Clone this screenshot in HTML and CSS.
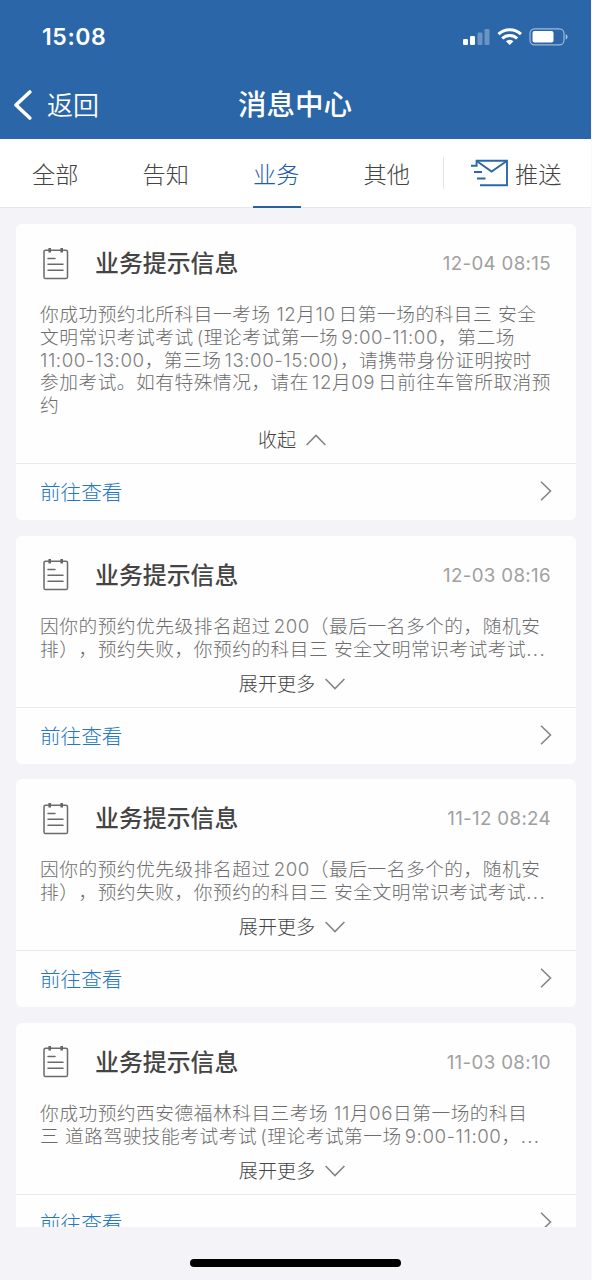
FILE: index.html
```html
<!DOCTYPE html>
<html lang="zh-CN">
<head>
<meta charset="utf-8">
<title>消息中心</title>
<link rel="stylesheet" href="styles.css">
</head>
<body>
<svg class="defs" width="0" height="0" aria-hidden="true">
  <symbol id="note" viewBox="0 0 26 32"><g fill="none" stroke="#6a6a6a" stroke-width="1.5"><rect x="1" y="2.2" width="23.5" height="28.3" rx="1.6"/><path d="M5 10.5h7M5 16.3h15M5 22.3h15" stroke-linecap="round"/></g><path d="M6.7 0v4.4M18.7 0v4.4" stroke="#666" stroke-width="2.6"/></symbol>
  <symbol id="right" viewBox="0 0 12 20"><path d="M1 .8 10.5 10 1 19.2" fill="none" stroke="#858585" stroke-width="1.6"/></symbol>
  <symbol id="up" viewBox="0 0 20 12"><path d="M.6 11 10 1.5 19.4 11" fill="none" stroke="#858585" stroke-width="1.6"/></symbol>
  <symbol id="down" viewBox="0 0 20 12"><path d="M.6 1 10 10.5 19.4 1" fill="none" stroke="#858585" stroke-width="1.6"/></symbol>
</svg>
<div class="app">
  <header class="top">
    <div class="status">
      <span class="clock">15:08</span>
      <svg class="status-icons" width="106" height="20" viewBox="0 0 106 20">
        <g fill="#fff"><rect x="1" y="11" width="5" height="6" rx="1.2"/><rect x="8" y="8" width="5" height="9" rx="1.2"/><g opacity=".3"><rect x="15.5" y="4.5" width="5" height="12.5" rx="1.2"/><rect x="22.5" y="1" width="5" height="16" rx="1.2"/></g>
        <path d="M47.7 17 43.9 13.2a5.5 5.5 0 0 1 7.6 0z"/><rect x="70.5" y="3" width="21" height="11.5" rx="2"/></g>
        <g fill="none" stroke="#fff"><path d="M36.5 6.2a16.2 16.2 0 0 1 22.5 0M40.2 10.5a11 11 0 0 1 15 0" stroke-width="3"/><rect x="68" y=".8" width="34" height="16" rx="4.6" stroke-width="1.2" opacity=".55"/></g><path d="M103.7 6v5.6q1.9-.9 1.9-2.8t-1.9-2.8z" fill="#fff" opacity=".6"/>
      </svg>
    </div>
    <nav class="nav">
      <a class="back"><svg width="19" height="30" viewBox="0 0 19 30"><path d="M16.8 2 3 15l13.8 13" fill="none" stroke="#fff" stroke-width="3.6" stroke-linecap="round" stroke-linejoin="round"/></svg><span>返回</span></a>
      <h1>消息中心</h1>
    </nav>
  </header>
  <div class="tabs">
    <a class="tab">全部</a><a class="tab">告知</a><a class="tab active">业务</a><a class="tab">其他</a>
    <a class="push"><svg width="38" height="28" viewBox="0 0 38 28"><g fill="none" stroke="#2c68a9" stroke-width="1.9"><path d="M0 6.8h5.6V1.7H36v24.5H9M3 13h8M6 19.5h8.5"/><path d="M6 2.2 20.6 12.6 35.4 2.2"/></g></svg><span>推送</span></a>
  </div>
  <main class="list">
    <article class="card">
      <div class="head"><svg class="note"><use href="#note"/></svg><h2>业务提示信息</h2><time>12-04 08:15</time></div>
      <div class="text">
        <p>你成功预约北所科目一考场 <i>12</i>月<i class="after">10</i>日第一场的科目三 安全</p>
        <p>文明常识考试考试<i class="before">(</i>理论考试第一场<i class="before">9:00-11:00</i>，第二场</p>
        <p><i>11:00-13:00</i>，第三场<i class="before">13:00-15:00)</i>，请携带身份证明按时</p>
        <p>参加考试。如有特殊情况，请在<i class="before">12</i>月<i class="after">09</i>日前往车管所取消预</p>
        <p>约</p>
      </div>
      <div class="toggle"><span>收起</span><svg><use href="#up"/></svg></div>
      <a class="foot"><span>前往查看</span><svg><use href="#right"/></svg></a>
    </article>
    <article class="card">
      <div class="head"><svg class="note"><use href="#note"/></svg><h2>业务提示信息</h2><time>12-03 08:16</time></div>
      <div class="text">
        <p>因你的预约优先级排名超过<i class="before">200</i>（最后一名多个的，随机安</p>
        <p>排），预约失败，你预约的科目三 安全文明常识考试考试<i class="dots">...</i></p>
      </div>
      <div class="toggle"><span>展开更多</span><svg><use href="#down"/></svg></div>
      <a class="foot"><span>前往查看</span><svg><use href="#right"/></svg></a>
    </article>
    <article class="card">
      <div class="head"><svg class="note"><use href="#note"/></svg><h2>业务提示信息</h2><time>11-12 08:24</time></div>
      <div class="text">
        <p>因你的预约优先级排名超过<i class="before">200</i>（最后一名多个的，随机安</p>
        <p>排），预约失败，你预约的科目三 安全文明常识考试考试<i class="dots">...</i></p>
      </div>
      <div class="toggle"><span>展开更多</span><svg><use href="#down"/></svg></div>
      <a class="foot"><span>前往查看</span><svg><use href="#right"/></svg></a>
    </article>
    <article class="card">
      <div class="head"><svg class="note"><use href="#note"/></svg><h2>业务提示信息</h2><time>11-03 08:10</time></div>
      <div class="text">
        <p>你成功预约西安德福林科目三考场 <i>11</i>月<i>06</i>日第一场的科目</p>
        <p>三 道路驾驶技能考试考试<i class="before">(</i>理论考试第一场<i class="before">9:00-11:00</i>，<i class="dots">...</i></p>
      </div>
      <div class="toggle"><span>展开更多</span><svg><use href="#down"/></svg></div>
      <a class="foot"><span>前往查看</span><svg><use href="#right"/></svg></a>
    </article>
  </main>
  <div class="home"><div class="bar"></div></div>
</div>
</body>
</html>
```
FILE: styles.css
```css
* { box-sizing: border-box; margin: 0; padding: 0; }
body { background: #f9f9fc; font-family: Inter, "Noto Sans CJK SC", sans-serif; overflow: hidden; text-spacing-trim: space-all; }
.defs { display: block; height: 0; }
.app { width: 591px; height: 1280px; background: #f3f3f8; display: flex; flex-direction: column; }
.top { height: 139px; background: #2a66a8; color: #fff; flex: none; }
.status { height: 70px; display: flex; justify-content: space-between; align-items: flex-start; padding: 22px 23px 0 42px; }
.clock { font-size: 23px; line-height: 30px; font-weight: 600; letter-spacing: .6px; }
.status-icons { margin-top: 6px; }
.nav { display: grid; grid-template-columns: 1fr auto 1fr; align-items: center; height: 69px; padding-left: 13px; }
.back { display: flex; align-items: center; gap: 15px; font-size: 26px; font-weight: 350; }
.back span { padding-bottom: 2px; }
h1 { font-size: 28.5px; font-weight: 500; padding: 0 14px 4px 0; }
.tabs { height: 69px; flex: none; display: flex; background: #fff; border-bottom: 1px solid #e5e5ea; font-size: 23.2px; font-weight: 300; color: #444; }
.tab { width: 110.5px; height: 69px; display: flex; align-items: center; justify-content: center; padding-bottom: 2px; position: relative; }
.active { color: #1f5ea6; }
.active::after { content: ""; position: absolute; left: 32px; bottom: 0; width: 48px; height: 2px; background: #2c5f9e; }
.push { display: flex; align-items: center; gap: 6px; height: 32px; margin: 18px 0 0 1px; border-left: 1px solid #e4e4e4; padding-left: 27px; }
.push span { padding-bottom: 1px; }
.list { flex: none; height: 1019px; padding: 16px 16px 0; display: flex; flex-direction: column; gap: 15.5px; overflow: hidden; }
.card { background: #fefefe; border-radius: 6px; width: 560px; flex: none; }
.head { height: 79px; display: flex; align-items: center; padding: 0 25px 0 26.5px; }
.note { width: 26px; height: 32px; flex: none; }
h2 { font-size: 23.9px; line-height: 30px; font-weight: 500; color: #444; margin-left: 26.5px; padding-top: 1px; }
time { margin-left: auto; font-size: 18.7px; color: #a0a0a0; letter-spacing: .35px; }
.text { padding-left: 24px; color: #6c6c6c; font-size: 18.7px; font-weight: 300; line-height: 22.75px; letter-spacing: .53px; }
.text p { height: 22.75px; white-space: nowrap; position: relative; top: 1px; }
.text i { font-style: normal; font-weight: 350; color: #808080; letter-spacing: .55px; }
.text .before { margin-left: 3px; }
.text .after { margin-right: 3px; }
.text .dots { letter-spacing: 1.3px; }
.toggle { height: 46.5px; display: flex; align-items: center; justify-content: center; gap: 10px; font-size: 19.1px; font-weight: 300; color: #444; padding: 0 8px 2px 0; }
.toggle svg { width: 20px; height: 12px; position: relative; top: 1px; }
.foot { height: 57px; border-top: 1px solid #e9e9ed; padding: 0 24px 2px; display: flex; justify-content: space-between; align-items: center; font-size: 20.6px; font-weight: 300; color: #2477c4; }
.foot svg { width: 12px; height: 20px; }
.home { flex: 1; display: flex; justify-content: center; padding-top: 32px; }
.bar { width: 211px; height: 8px; border-radius: 4px; background: #000; }
```
